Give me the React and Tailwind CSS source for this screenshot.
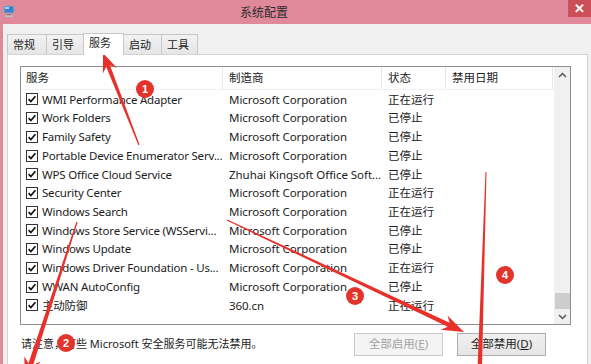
import React from "react";

// services listed in the msconfig dialog
const rows = [
  ["WMI Performance Adapter", "Microsoft Corporation", "正在运行"],
  ["Work Folders", "Microsoft Corporation", "已停止"],
  ["Family Safety", "Microsoft Corporation", "已停止"],
  ["Portable Device Enumerator Serv...", "Microsoft Corporation", "已停止"],
  ["WPS Office Cloud Service", "Zhuhai Kingsoft Office Soft...", "已停止"],
  ["Security Center", "Microsoft Corporation", "正在运行"],
  ["Windows Search", "Microsoft Corporation", "正在运行"],
  ["Windows Store Service (WSServi...", "Microsoft Corporation", "已停止"],
  ["Windows Update", "Microsoft Corporation", "已停止"],
  ["Windows Driver Foundation - Us...", "Microsoft Corporation", "正在运行"],
  ["WWAN AutoConfig", "Microsoft Corporation", "已停止"],
  ["主动防御", "360.cn", "正在运行"],
];

const tabs = [
  { label: "常规", w: "w-[40px]" },
  { label: "引导", w: "w-[38px]" },
  { label: "服务", w: "w-[41px]", active: true },
  { label: "启动", w: "w-[39px]" },
  { label: "工具", w: "w-[37px]" },
];

function Check() {
  return (
    <svg width="12" height="12" viewBox="0 0 12 12" className="shrink-0">
      <rect x="0.5" y="0.5" width="11" height="11" fill="#fff" stroke="#333" />
      <path d="M2.6 6.2 L4.9 8.6 L9.4 3.2" fill="none" stroke="#111" strokeWidth="1.7" />
    </svg>
  );
}

// tapered annotation arrow, thin at the tail and wide near the head
function arrowPoints(x1, y1, x2, y2, t, s, headLen, headW) {
  const dx = x2 - x1, dy = y2 - y1;
  const L = Math.hypot(dx, dy);
  const ux = dx / L, uy = dy / L;
  const px = -uy, py = ux;
  const nx = x2 - ux * (headLen - 5), ny = y2 - uy * (headLen - 5);
  const bx = x2 - ux * headLen, by = y2 - uy * headLen;
  const pts = [
    [x1 + px * t / 2, y1 + py * t / 2],
    [nx + px * s / 2, ny + py * s / 2],
    [bx + px * headW / 2, by + py * headW / 2],
    [x2, y2],
    [bx - px * headW / 2, by - py * headW / 2],
    [nx - px * s / 2, ny - py * s / 2],
    [x1 - px * t / 2, y1 - py * t / 2],
  ];
  return pts.map((p) => p[0].toFixed(1) + "," + p[1].toFixed(1)).join(" ");
}

function Badge({ n }) {
  return (
    <div className="w-[18px] h-[18px] rounded-full bg-[#e3342c] text-white text-[11px] font-bold flex items-center justify-center leading-none font-['Liberation_Sans',sans-serif]">
      {n}
    </div>
  );
}

export default function App() {
  return (
    <div className="relative w-[591px] h-[364px] overflow-hidden bg-[#f0f0f0] font-['Noto_Sans','Noto_Sans_CJK_SC',sans-serif] text-[#1c1c1c]">
      {/* title bar */}
      <div className="h-[24px] bg-[#e0899a] flex items-start">
        <svg width="12" height="12" viewBox="0 0 12 12" className="ml-[3px] mt-[5px]">
          <rect x="0.5" y="0.5" width="11" height="8" fill="#9aa7b8" />
          <rect x="1.5" y="1.5" width="9" height="6" fill="#3b7fd0" />
          <rect x="2" y="2" width="4" height="2" fill="#9fd0ff" />
          <rect x="4" y="9" width="4" height="1.5" fill="#7d8796" />
          <rect x="2" y="10.5" width="8" height="1.5" fill="#b9c1cc" />
        </svg>
        <div className="ml-[225px] mt-[4px] text-[12px] leading-[16px] text-[#2b2b2b] font-['Noto_Sans_CJK_SC',sans-serif]">系统配置</div>
        <div className="ml-auto w-[23px] h-[17px] bg-[#cc4f57] text-white flex items-center justify-center text-[13px] font-bold leading-none font-['Liberation_Sans',sans-serif]">✕</div>
      </div>

      {/* body */}
      <div className="h-[340px] border-l-[3px] border-[#e0899a] pl-[4px] pt-[9px]">
        {/* tabs */}
        <div className="flex items-end h-[21px]">
          {tabs.map((t) =>
            t.active ? (
              <div
                key={t.label}
                className={`${t.w} h-[22px] -ml-px -mb-px relative z-10 bg-white border border-b-0 border-[#c7c7c7] pl-[5px] pt-[1px] text-[11px] leading-[16px]`}
              >
                {t.label}
              </div>
            ) : (
              <div
                key={t.label}
                className={`${t.w} h-[20px] -ml-px first:ml-0 bg-gradient-to-b from-[#f2f2f2] to-[#e6e6e6] border border-b-0 border-[#c7c7c7] pl-[5px] pt-[2px] text-[11px] leading-[16px]`}
              >
                {t.label}
              </div>
            )
          )}
        </div>

        {/* tab page */}
        <div className="w-[581px] h-[320px] bg-white border border-[#d4d4d4] pl-[12px] pt-[11px]">
          {/* list box */}
          <div className="w-[551px] h-[259px] border border-[#8c8f96] flex">
            <div className="w-[533px] overflow-hidden">
              <div className="flex h-[23px] items-center text-[11.5px] border-b border-[#eef1f5]">
                <div className="w-[202px] h-full pl-[5px] flex items-center border-r border-[#e6e6e6]">服务</div>
                <div className="w-[159px] h-full pl-[6px] flex items-center border-r border-[#e6e6e6]">制造商</div>
                <div className="w-[64px] h-full pl-[6px] flex items-center border-r border-[#e6e6e6]">状态</div>
                <div className="w-[107px] h-full pl-[6px] flex items-center border-r border-[#dfe8f3]">禁用日期</div>
              </div>
              {rows.map((r) => (
                <div key={r[0]} className="flex h-[18.73px] items-center text-[11.5px] whitespace-nowrap">
                  <div className="w-[202px] pl-[5px] flex items-center gap-[4px] overflow-hidden">
                    <Check />
                    <span className="tracking-[-0.2px]">{r[0]}</span>
                  </div>
                  <div className="w-[159px] pl-[6px] tracking-[-0.05px]">{r[1]}</div>
                  <div className="w-[64px] pl-[6px]">{r[2]}</div>
                  <div className="w-[107px]"></div>
                </div>
              ))}
            </div>
            {/* scrollbar */}
            <div className="w-[16px] bg-[#f0f0f0] flex flex-col items-center">
              <svg width="9" height="6" viewBox="0 0 9 6" className="mt-[5px]">
                <path d="M1 5 L4.5 1.5 L8 5" fill="none" stroke="#555" strokeWidth="1.5" />
              </svg>
              <div className="flex-1" />
              <div className="w-[15px] h-[16px] bg-[#cdcdcd]" />
              <svg width="9" height="6" viewBox="0 0 9 6" className="mt-[5px] mb-[4px]">
                <path d="M1 1 L4.5 4.5 L8 1" fill="none" stroke="#555" strokeWidth="1.5" />
              </svg>
            </div>
          </div>

          {/* bottom row */}
          <div className="flex items-center mt-[7px] h-[24px]">
            <div className="ml-[1px] text-[11px] text-[#1c1c1c]">请注意，有些 Microsoft 安全服务可能无法禁用。</div>
            <div className="ml-auto mr-[41px] flex gap-[14px]">
              <div className="w-[89px] h-[23px] border border-[#c9c9c9] bg-[#f4f4f4] text-[#a3a3a3] text-[11.5px] flex items-center justify-center">
                全部启用(<span className="underline">E</span>)
              </div>
              <div className="w-[89px] h-[23px] border border-[#adadad] bg-gradient-to-b from-[#f0f0f0] to-[#e5e5e5] text-[#1c1c1c] text-[11.5px] flex items-center justify-center">
                全部禁用(<span className="underline">D</span>)
              </div>
            </div>
          </div>
        </div>
      </div>

      {/* annotations */}
      <svg className="absolute inset-0 pointer-events-none" width="591" height="364" viewBox="0 0 591 364">
        <g fill="#e8312b">
          <polygon points={arrowPoints(139, 145, 103, 53, 1.2, 4, 19, 15)} />
          <polygon points={arrowPoints(77, 222, 25, 382, 1.2, 5, 24, 17)} />
          <polygon points={arrowPoints(227, 220, 464, 332, 1.2, 4.5, 22, 16)} />
          <polygon points={arrowPoints(486, 172, 479, 390, 1, 4.5, 24, 17)} />
        </g>
      </svg>
      <div className="absolute left-[136px] top-[80px]"><Badge n="1" /></div>
      <div className="absolute left-[57px] top-[334px]"><Badge n="2" /></div>
      <div className="absolute left-[346px] top-[287px]"><Badge n="3" /></div>
      <div className="absolute left-[496px] top-[266px]"><Badge n="4" /></div>
    </div>
  );
}
